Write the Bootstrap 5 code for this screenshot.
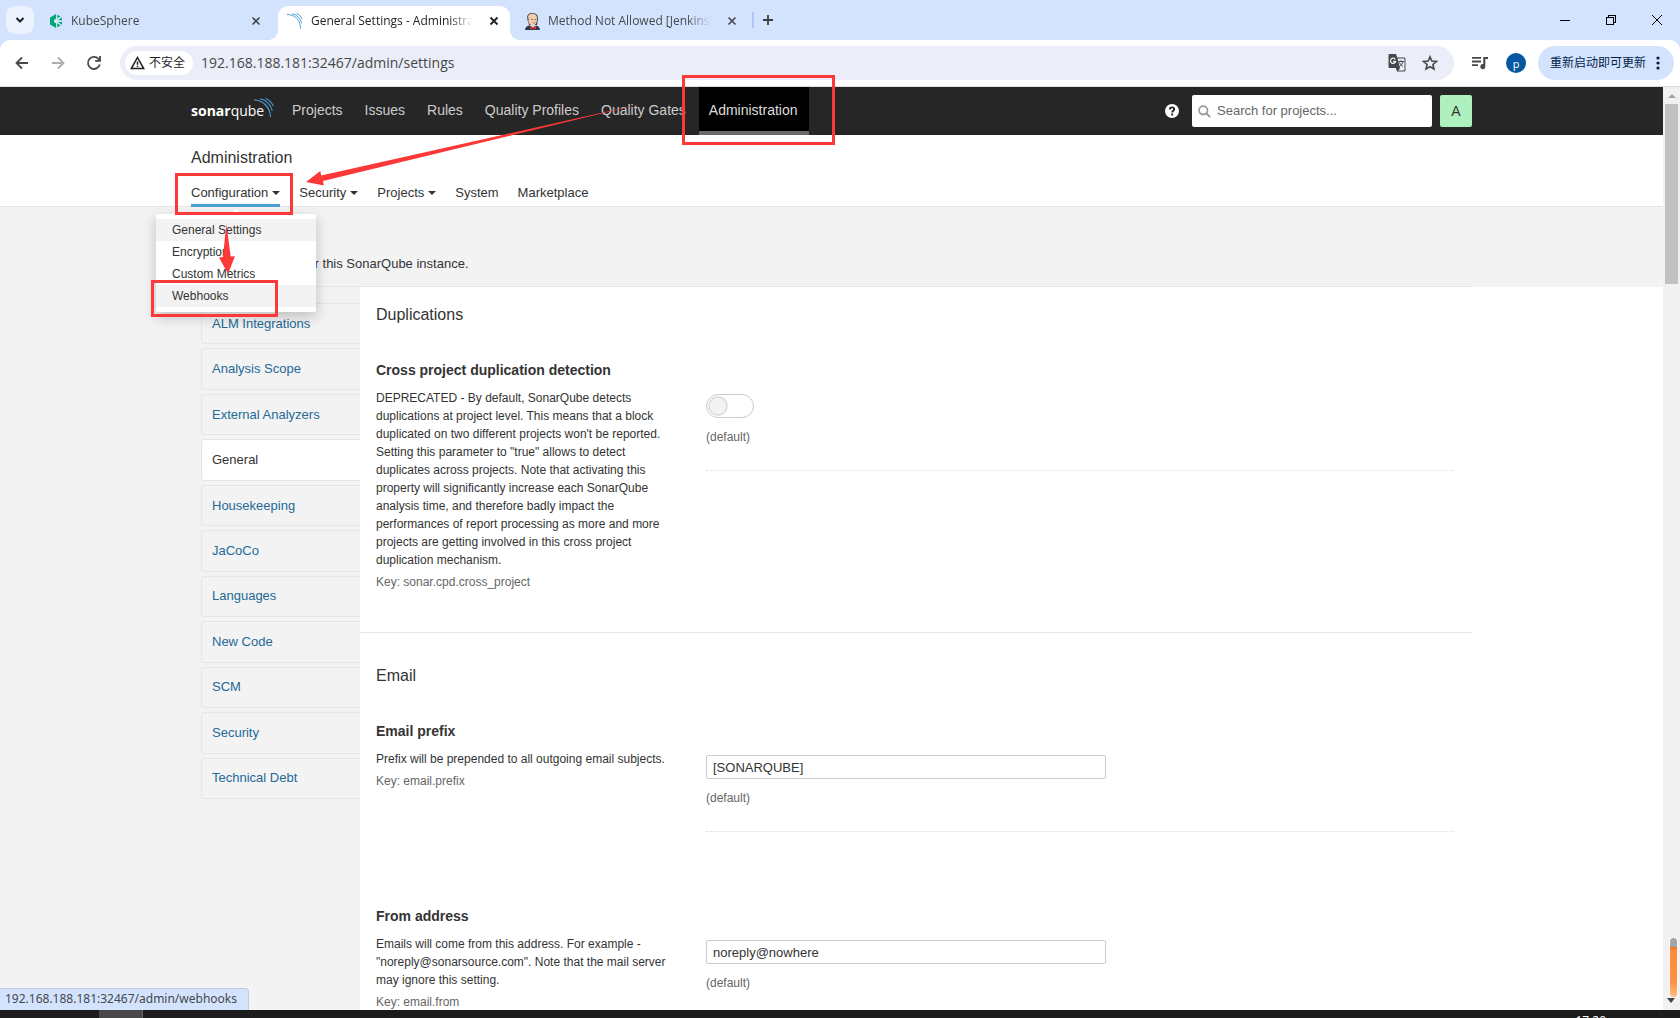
<!DOCTYPE html>
<html lang="en">
<head>
<meta charset="utf-8">
<meta name="viewport" content="width=device-width, initial-scale=1">
<title>General Settings - Administration</title>
<link href="https://cdn.jsdelivr.net/npm/bootstrap@5.3.0/dist/css/bootstrap.min.css" rel="stylesheet">
<style>
:root{--ui:"Open Sans","Noto Sans CJK SC",sans-serif}
body{font:13px/20px "Liberation Sans",Arial,sans-serif;color:#333;height:100vh;overflow:hidden;background:#fff}
a{color:inherit;text-decoration:none}
button{border:0;background:none;padding:0;color:inherit;line-height:1}
svg{display:block;flex:none}

/* browser frame */
.strip{height:40px;background:#d3e3fd;font:12px/20px var(--ui);color:#45494e;padding-left:6px}
.tab-search{width:28px;height:28px;border-radius:9px;background:#ecf3fe;color:#1f1f1f;margin:6px 10px 6px 0}
.btab{height:40px;padding:6px 17px 4px 5px;width:234px}
.btab.last{padding-left:15px;padding-right:7px}
.btab .ttl{overflow:hidden;white-space:nowrap;-webkit-mask-image:linear-gradient(90deg,#000 calc(100% - 24px),transparent)}
.btab.on{position:relative;background:#fff;color:#1f1f1f;border-radius:10px 10px 0 0;height:34px;margin-top:6px;padding:0 11px 4px 9px;width:232px}
.btab.on::before,.btab.on::after{content:"";position:absolute;bottom:0;width:10px;height:10px}
.btab.on::before{left:-10px;background:radial-gradient(circle at 0 0,transparent 10px,#fff 10px)}
.btab.on::after{right:-10px;background:radial-gradient(circle at 100% 0,transparent 10px,#fff 10px)}
.tab-rule{width:2px;height:16px;background:#a8c7fa;margin:12px 8px 12px 0}
.wctl{width:46px;height:40px;color:#000}
.toolbar{background:#d3e3fd;border-bottom:1px solid #dcdcdc;color:#474747;font-family:var(--ui)}
.toolbar-in{background:#fff;border-radius:10px 10px 0 0;height:46px;padding:6px 6px 6px 14px}
.tools{gap:20px}
.omni{height:34px;border-radius:17px;background:#ebeef8;margin-left:18px;padding:0 16px 0 5px}
.chip{height:24px;border-radius:12px;background:#fff;padding:0 8px 0 5px;font-size:12px;color:#1f1f1f}
.url{border:0;background:none;outline:0;color:#474747;font:14px/20px var(--ui);padding:0;min-width:0}
.media{margin:0 2px 0 18px}
.profile{width:20px;height:20px;border-radius:50%;background:#0457a0;color:#fff;font-size:11px}
.update{height:34px;width:136px;border-radius:17px;background:#d3e3fd;color:#041e49;font-size:12px}

/* application header */
.wrap{max-width:1281px;width:100%;margin:0 auto}
.apphead{background:#262626;height:48px}
.brand{font:14px/20px "Open Sans",sans-serif;color:#fff;width:92px}
.brand svg{margin:-3px 0 0 -10px}
.topnav a{font-size:14px;line-height:46px;height:48px;padding:0 9px;color:#ccc;margin-right:4px;white-space:nowrap}
.topnav a.on{background:#000;color:#ddd;border-bottom:4px solid #6a6a6a;padding:0 11px 0 10px}
.find{width:240px;height:32px;background:#fff;border-radius:2px;padding-left:6px;gap:6px;margin:0 8px 0 13px}
.find input{border:0;outline:0;font-size:13px;line-height:20px;color:#333;background:none;padding:0}
.find input::placeholder{color:#666}
.avatar{width:32px;height:32px;background:#aff0bf;border-radius:2px;color:#333;font-size:14px}

/* administration navigation */
.ctx{height:72px;border-bottom:1px solid #e6e6e6;background:#fff}
.ctx h1{font-size:16px;line-height:20px;font-weight:400;margin:0;padding-top:13px}
.subnav{gap:19px;margin-top:14px}
.subnav>li>a{display:flex;align-items:center;gap:4px;height:25px;line-height:20px;border-bottom:3px solid transparent}
.subnav>li>a.on{border-color:#4b9fd5}
.subnav .tri{width:0;height:0;border:4px solid transparent;border-top-color:#333;border-bottom:0}
.conf{display:block;top:32px;left:-35px;width:160px;min-width:0;padding:5px 0;border:0;border-radius:2px;background:#fff;box-shadow:0 5px 14px rgba(0,0,0,.22);font-size:12px}
.conf::before{content:"";position:absolute;left:75px;top:-5px;border:5px solid transparent;border-top:0;border-bottom-color:#fff}
.conf a{display:block;line-height:22px;padding:0 16px;color:#333}
.conf a.hl{background:#f3f3f3}

/* settings page */
.intro{background:#f3f3f3;height:80px}
.intro p{padding-top:47px;margin:0;height:80px;border-bottom:1px solid #e6e6e6}
.grey{background:#f3f3f3}
.side{width:169px;background:#f3f3f3;padding:16px 0 0 10px;flex:none}
.side ul{height:496px;gap:4px}
.side a{display:flex;align-items:center;height:100%;padding:0 10px;border:1px solid #e6e6e6;border-right:0;border-radius:3px 0 0 3px;color:#236a97}
.side a.on{background:#fff;color:#333}
.pane{width:1112px;flex:0 1 auto}
.sect{padding-top:31px}
.sect:first-child{padding-top:16px}
.sect+.sect{border-top:1px solid #e6e6e6}
.sect h2{font-size:16px;line-height:24px;font-weight:400;margin:0;padding-left:16px}
.prop{padding:33px 18px 41px 16px;gap:30px}
.about{width:300px;flex:none;font-size:12px;line-height:18px}
.about h3{font-size:14px;line-height:20px;font-weight:700;margin:0 0 9px}
.about p{margin:0 0 4px}
.dim{color:#666;font-size:12px;line-height:18px}
.value{padding-top:34px}
.value .dim{margin-top:10px;padding-bottom:24px;border-bottom:1px dotted #ddd}
.value input[type=text]{display:block;width:400px;height:24px;border:1px solid #ccc;border-radius:2px;padding:0 6px;font-size:13px;color:#333}
.toggle{appearance:none;display:block;width:48px;height:24px;border:1px solid #ccc;border-radius:12px;background:radial-gradient(circle at 11px 11px,#f3f3f3 8px,#ccc 9px,#ccc 9px,transparent 10px);margin:0}

/* scroll bar, status bubble, task bar */
.sbar{width:17px;background:#f1f1f1;padding-top:7px;flex:none}
.sbar .up{width:0;height:0;border:4px solid transparent;border-bottom:4px solid #a3a3a3;border-top:0}
.sbar .thumb{width:13px;height:180px;background:#c1c1c1;margin-top:6px}
.gauge{right:3px;bottom:21px;width:7px;height:59px;border-radius:4px;background:linear-gradient(#a5a5a5 9px,#e8751f 9px,#ff8b39 13px,#ff9145 44px,#ffc080);box-shadow:0 0 0 1px #f8f8f8}
.down{right:5px;bottom:15px;border:4px solid transparent;border-top:5px solid #444;border-bottom:0}
.status{left:0;bottom:8px;height:22px;min-width:249px;padding:0 8px 0 5px;background:#d3e3fd;border:1px solid #c4cbd8;border-left:0;border-bottom:0;border-radius:0 4px 0 0;font:12px/20px "Noto Sans","Open Sans",sans-serif;color:#45494e}
.task{height:8px;background:#1c1c1c;padding-left:99px;padding-right:74px;overflow:hidden;flex:none}
.task i{width:44px;background:#484848;border-right:1px solid #666}
.task time{font:12px/16px var(--ui);color:#fff;padding-top:3px}
.marks{left:0;top:0;pointer-events:none;z-index:2000}
</style>
<script src="https://cdn.jsdelivr.net/npm/bootstrap@5.3.0/dist/js/bootstrap.bundle.min.js"></script>
</head>
<body class="d-flex flex-column position-relative">

<div class="strip d-flex flex-shrink-0">
  <button class="tab-search d-flex align-items-center justify-content-center" aria-label="Search tabs"><svg width="10" height="10" viewBox="0 0 10 10" fill="none" stroke="currentColor" stroke-width="2"><path d="M1.500 3l3.500 3.500L8.500 3"/></svg></button>
  <div class="btab d-flex align-items-center">
    <svg width="14" height="14" viewBox="0 0 14 14"><path fill="#00a971" d="M7 0l6 3.500v7L7 14l-6-3.500v-7z"/><path fill="#d3e3fd" d="M7 0h1.200v4L12 2.600l1.300 1L9 5.700l4.500.9v1.300L9 8l4 2.700-1 1-3.800-2.400V14H7V9.500L5 8V6l2-1.500z"/></svg>
    <span class="ttl flex-fill ms-2">KubeSphere</span>
    <button aria-label="Close tab"><svg width="10" height="10" viewBox="0 0 10 10" stroke="currentColor" stroke-width="1.600"><path d="M1.500 1.500l7 7m0-7l-7 7"/></svg></button>
  </div>
  <div class="btab on d-flex align-items-center">
    <svg width="16" height="16" viewBox="0 0 16 16" fill="none" stroke="#4b9fd5" stroke-width="1"><path d="M0 1.500C8 1.500 13.500 7 13.500 15.500M5 .8c5 1 8.500 4.500 9.600 9.500M9.500.5c2.800 1 4.700 3 5.700 5.500"/></svg>
    <span class="ttl flex-fill ms-2">General Settings - Administration</span>
    <button class="ms-3" aria-label="Close tab"><svg width="10" height="10" viewBox="0 0 10 10" stroke="currentColor" stroke-width="1.800"><path d="M1.500 1.500l7 7m0-7l-7 7"/></svg></button>
  </div>
  <div class="btab last d-flex align-items-center">
    <svg width="15" height="17" viewBox="0 0 15 17"><path fill="#4a3a35" d="M2 5C2 1.500 4 0 7.500 0S13 2 13 6l-1 6H4z"/><path fill="#efcfb0" d="M2.800 5C3.300 1.500 5 .8 7.500.8c3 0 4.800 2 4.600 5.500-.1 3.500-1.800 6.200-4.300 6.200S3.600 10 3.200 8z"/><path fill="#8d7263" d="M2 4l1.600.5.5 3.500-1.500-.5zM6 6h2v1H6zm3.500 0h2v1h-2zM7.500 9.500h3v.8h-3z"/><path fill="#2b3a4c" d="M0 17c.3-3 2-4.500 5-4.500l3 2 3-2c2.500.5 3.700 2 4 4.500z"/><path fill="#d33833" d="M5 13l3 1.200 3-1.200v3.600l-3-1.200-3 1.200z"/></svg>
    <span class="ttl flex-fill ms-2">Method Not Allowed [Jenkins]</span>
    <button class="ms-3" aria-label="Close tab"><svg width="10" height="10" viewBox="0 0 10 10" stroke="currentColor" stroke-width="1.600"><path d="M1.500 1.500l7 7m0-7l-7 7"/></svg></button>
  </div>
  <div class="tab-rule ms-2"></div>
  <button aria-label="New tab"><svg width="12" height="12" viewBox="0 0 12 12" stroke="#3c4043" stroke-width="1.800"><path d="M6 1v10M1 6h10"/></svg></button>
  <div class="ms-auto d-flex">
    <button class="wctl d-flex align-items-center justify-content-center" aria-label="Minimize"><svg width="10" height="10" shape-rendering="crispEdges"><path fill="#000" d="M0 5h10v1H0z"/></svg></button>
    <button class="wctl d-flex align-items-center justify-content-center" aria-label="Restore"><svg width="10" height="10" fill="none" stroke="#000" shape-rendering="crispEdges"><path d="M.5 2.500h7v7h-7zM2.500 2V.5h7v7H8"/></svg></button>
    <button class="wctl d-flex align-items-center justify-content-center" aria-label="Close"><svg width="12" height="12" stroke="#000"><path d="M1 1l10 10M11 1L1 11"/></svg></button>
  </div>
</div>

<div class="toolbar flex-shrink-0">
  <div class="toolbar-in d-flex align-items-center">
    <div class="tools d-flex">
      <button aria-label="Back"><svg width="16" height="16" viewBox="0 0 16 16" fill="none" stroke="currentColor" stroke-width="1.800"><path d="M14 8H3M8 2.500L2.500 8 8 13.500"/></svg></button>
      <button aria-label="Forward"><svg width="16" height="16" viewBox="0 0 16 16" fill="none" stroke="#adadad" stroke-width="1.800"><path d="M2 8h11M8 2.500L13.500 8 8 13.500"/></svg></button>
      <button aria-label="Reload"><svg width="16" height="16" viewBox="0 0 16 16" fill="none" stroke="currentColor" stroke-width="1.800"><path d="M13.800 9.500A6 6 0 1 1 12.500 4l1.500 1.500M14 1v4.800H9.200"/></svg></button>
    </div>
    <div class="omni d-flex align-items-center flex-fill">
      <button class="chip d-flex align-items-center gap-1"><svg width="15" height="14" viewBox="0 0 15 14" fill="none" stroke="#1f1f1f" stroke-width="1.500"><path d="M7.500 1.500L13.700 12.600H1.300zM7.500 5.500v3.200M7.500 9.700v1.400"/></svg>不安全</button>
      <input class="url flex-fill ms-2" type="text" aria-label="Address" value="192.168.188.181:32467/admin/settings">
      <button aria-label="Translate"><svg width="18" height="18" viewBox="0 0 18 18"><path fill="#474747" d="M1 0h7l1.200 3.500H16c1 0 1.500.5 1.500 1.500v11c0 1-.5 1.500-1.500 1.500H9L7.800 14H2C1 14 .5 13.500.5 12.500V1z"/><path fill="#ebeef8" d="M9.600 4.600H16c.3 0 .5.200.5.500v10.800c0 .3-.2.500-.5.500h-5.600l1.600-2.400z"/><path fill="none" stroke="#ebeef8" stroke-width="1.300" d="M7.200 5.300A2.600 2.600 0 1 0 7.600 7.500H5.200"/><path fill="none" stroke="#474747" stroke-width="1" d="M10.500 7.500H16M13 6.300v1.200M15 7.500c-.5 2-2 3.700-3.500 4.800M11.500 8.500c.6 1.500 2 3 3.500 4"/></svg></button>
      <button class="ms-3" aria-label="Bookmark"><svg width="16" height="16" viewBox="0 0 16 16" fill="none" stroke="#474747" stroke-width="1.600"><path d="M8 1.800l1.800 4.300 4.600.4-3.500 3 1.100 4.500L8 11.600 4 14l1.100-4.500-3.500-3 4.600-.4z"/></svg></button>
    </div>
    <button class="media" aria-label="Media controls"><svg width="16" height="14" viewBox="0 0 16 14"><path fill="#474747" d="M0 1h9v1.800H0zM0 4.600h9v1.800H0zM0 8.200h6V10H0zM11.300 1H16v2h-2.700v7.600a2.500 2.500 0 1 1-2-2.400z"/></svg></button>
    <button class="profile ms-3 me-2" aria-label="Profile">p</button>
    <button class="update ms-1 d-flex align-items-center justify-content-center gap-2">重新启动即可更新<svg width="8" height="16" viewBox="0 0 8 16" fill="#041e49"><circle cx="4" cy="3" r="1.600"/><circle cx="4" cy="8" r="1.600"/><circle cx="4" cy="13" r="1.600"/></svg></button>
  </div>
</div>

<div class="d-flex flex-fill overflow-hidden">
  <div class="flex-fill d-flex flex-column overflow-hidden">
    <header class="apphead flex-shrink-0">
      <div class="wrap d-flex align-items-center">
        <a class="brand d-flex" href="#"><span><b>sonar</b>qube</span><svg width="21" height="21" viewBox="0 0 21 21" fill="none" stroke="#4b9fd5" stroke-width="1.100"><path d="M0 2c9 0 16 7 16.500 17M6 .8c6 1.300 10.500 5.500 12.300 12M11.500.5c3.700 1.300 6.200 4 7.700 7.500"/></svg></a>
        <nav class="topnav d-flex">
          <a href="#">Projects</a><a href="#">Issues</a><a href="#">Rules</a><a href="#">Quality Profiles</a><a href="#">Quality Gates</a><a class="on" href="#">Administration</a>
        </nav>
        <button class="ms-auto" aria-label="Help"><svg width="14" height="14" viewBox="0 0 14 14"><circle cx="7" cy="7" r="7" fill="#fff"/><path fill="none" stroke="#262626" stroke-width="1.900" d="M4.800 5.400c0-1.400 1-2 2.200-2s2.200.7 2.200 1.900c0 1.500-2 1.500-2 3.200M7.200 9.600v1.800"/></svg></button>
        <label class="find d-flex align-items-center"><svg width="13" height="13" viewBox="0 0 13 13" fill="none" stroke="#999" stroke-width="1.800"><circle cx="5.300" cy="5.300" r="4.200"/><path d="M8.500 8.500l3.700 3.700"/></svg><input class="flex-fill" type="search" placeholder="Search for projects..." aria-label="Search for projects"></label>
        <button class="avatar">A</button>
      </div>
    </header>

    <div class="ctx flex-shrink-0">
      <div class="wrap">
        <h1>Administration</h1>
        <ul class="subnav list-unstyled d-flex mb-0">
          <li class="position-relative"><a class="on" href="#">Configuration<span class="tri"></span></a>
            <div class="conf dropdown-menu show">
              <a class="hl" href="#">General Settings</a><a href="#">Encryption</a><a href="#">Custom Metrics</a><a class="hl" href="#">Webhooks</a>
            </div>
          </li>
          <li><a href="#">Security<span class="tri"></span></a></li>
          <li><a href="#">Projects<span class="tri"></span></a></li>
          <li><a href="#">System</a></li>
          <li><a href="#">Marketplace</a></li>
        </ul>
      </div>
    </div>

    <div class="intro flex-shrink-0"><div class="wrap"><p>Edit global settings for this SonarQube instance.</p></div></div>

    <div class="d-flex flex-fill overflow-hidden">
      <div class="grey flex-fill"></div>
      <nav class="side">
        <ul class="list-unstyled d-flex flex-column mb-0">
          <li class="flex-fill"><a href="#">ALM Integrations</a></li>
          <li class="flex-fill"><a href="#">Analysis Scope</a></li>
          <li class="flex-fill"><a href="#">External Analyzers</a></li>
          <li class="flex-fill"><a class="on" href="#">General</a></li>
          <li class="flex-fill"><a href="#">Housekeeping</a></li>
          <li class="flex-fill"><a href="#">JaCoCo</a></li>
          <li class="flex-fill"><a href="#">Languages</a></li>
          <li class="flex-fill"><a href="#">New Code</a></li>
          <li class="flex-fill"><a href="#">SCM</a></li>
          <li class="flex-fill"><a href="#">Security</a></li>
          <li class="flex-fill"><a href="#">Technical Debt</a></li>
        </ul>
      </nav>
      <main class="pane">
        <section class="sect">
          <h2>Duplications</h2>
          <div class="prop d-flex">
            <div class="about">
              <h3><label for="cpd">Cross project duplication detection</label></h3>
              <p>DEPRECATED - By default, SonarQube detects duplications at project level. This means that a block duplicated on two different projects won't be reported. Setting this parameter to "true" allows to detect duplicates across projects. Note that activating this property will significantly increase each SonarQube analysis time, and therefore badly impact the performances of report processing as more and more projects are getting involved in this cross project duplication mechanism.</p>
              <div class="dim">Key: sonar.cpd.cross_project</div>
            </div>
            <div class="value flex-fill"><input class="toggle" id="cpd" type="checkbox" role="switch"><div class="dim">(default)</div></div>
          </div>
        </section>
        <section class="sect">
          <h2>Email</h2>
          <div class="prop d-flex">
            <div class="about">
              <h3><label for="prefix">Email prefix</label></h3>
              <p>Prefix will be prepended to all outgoing email subjects.</p>
              <div class="dim">Key: email.prefix</div>
            </div>
            <div class="value flex-fill"><input id="prefix" type="text" value="[SONARQUBE]"><div class="dim">(default)</div></div>
          </div>
          <div class="prop d-flex">
            <div class="about">
              <h3><label for="from">From address</label></h3>
              <p>Emails will come from this address. For example - "noreply@sonarsource.com". Note that the mail server may ignore this setting.</p>
              <div class="dim">Key: email.from</div>
            </div>
            <div class="value flex-fill"><input id="from" type="text" value="noreply@nowhere"><div class="dim">(default)</div></div>
          </div>
        </section>
      </main>
      <div class="flex-fill"></div>
    </div>
  </div>
  <div class="sbar d-flex flex-column align-items-center"><span class="up"></span><span class="thumb"></span></div>
</div>

<div class="task d-flex"><i></i><time class="ms-auto">17:20</time></div>

<div class="status position-absolute">192.168.188.181:32467/admin/webhooks</div>
<div class="gauge position-absolute"></div>
<div class="down position-absolute"></div>

<svg class="marks position-absolute" width="840" height="330" viewBox="0 0 840 330">
  <g fill="none" stroke="#fd3838" stroke-width="3"><path d="M683.500 76.500h150v67h-150zM176.500 174.500h115v39h-115zM152.500 281.500h124v34h-124z"/></g>
  <g fill="#fd3838"><path d="M306 182l14.300-11 .9 4.600L645 103 323 181l.8 4.500z"/><path d="M226.300 224l4.400 32.600 4.300-.4-7 17.500-9-16.200 4-.5z"/></g>
</svg>
</body>
</html>
